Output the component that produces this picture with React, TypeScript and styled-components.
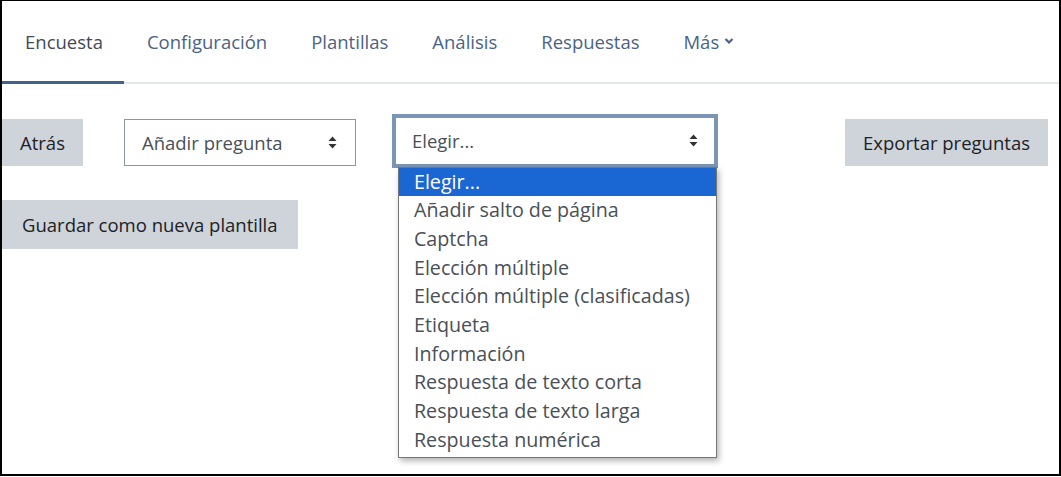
import styled, { createGlobalStyle } from 'styled-components';

const GlobalStyle = createGlobalStyle`
  body {
    margin: 0;
    background: #fff;
    font-family: "Open Sans", "Noto Sans", sans-serif;
  }
`;

const tabs = ['Encuesta', 'Configuración', 'Plantillas', 'Análisis', 'Respuestas'];

const options = [
  'Elegir...',
  'Añadir salto de página',
  'Captcha',
  'Elección múltiple',
  'Elección múltiple (clasificadas)',
  'Etiqueta',
  'Información',
  'Respuesta de texto corta',
  'Respuesta de texto larga',
  'Respuesta numérica',
];

const SortArrows = () => (
  <svg width="9" height="13" viewBox="0 0 9 13">
    <path d="M4.5 0.5 L8.5 5 H0.5 Z" fill="#333" />
    <path d="M4.5 12.5 L8.5 8 H0.5 Z" fill="#333" />
  </svg>
);

const Chevron = () => (
  <svg width="10" height="8" viewBox="0 0 10 8">
    <path d="M1.5 2 L5 5.5 L8.5 2" stroke="#4a6385" strokeWidth="2.2" fill="none" />
  </svg>
);

const App = () => {
  return (
    <>
      <GlobalStyle />
      <Frame>
        <TabNav>
          {tabs.map((t, i) => (
            <Tab key={t} active={i === 0}>{t}</Tab>
          ))}
          <Tab active={false}>
            Más <Chevron />
          </Tab>
        </TabNav>
        <Toolbar>
          <GrayButton>Atrás</GrayButton>
          <Select>
            <span>Añadir pregunta</span>
            <SortArrows />
          </Select>
          <FocusRing>
            <ChoiceSelect>
              <span>Elegir...</span>
              <SortArrows />
            </ChoiceSelect>
            <OptionList>
              {options.map((o, i) => (
                <OptionItem key={o} selected={i === 0}>{o}</OptionItem>
              ))}
            </OptionList>
          </FocusRing>
          <Spacer />
          <GrayButton>Exportar preguntas</GrayButton>
        </Toolbar>
        <SecondRow>
          <GrayButton tall pad={20}>Guardar como nueva plantilla</GrayButton>
        </SecondRow>
      </Frame>
    </>
  );
};

const Frame = styled.div`
  box-sizing: border-box;
  width: 1061px;
  height: 476px;
  border-style: solid;
  border-color: #000;
  border-width: 1px 2px 2px 2px;
  display: flex;
  flex-direction: column;
  font-size: 18.5px;
`;

const TabNav = styled.nav`
  display: flex;
  height: 81px;
  border-bottom: 2px solid #e3e6ea;
  font-size: 18.5px;
`;

const Tab = styled.div<{ active: boolean }>`
  display: flex;
  align-items: center;
  gap: 5px;
  padding: 0 21px 0 23px;
  margin-bottom: -2px;
  color: ${(p) => (p.active ? '#3f4a5a' : '#4a6385')};
  border-bottom: 3px solid ${(p) => (p.active ? '#3f6390' : 'transparent')};
`;

const Toolbar = styled.div`
  display: flex;
  align-items: center;
  margin-top: 35px;
  height: 47px;
  padding-right: 11px;
`;

const GrayButton = styled.button<{ pad?: number; tall?: boolean }>`
  font-family: inherit;
  font-size: 18.5px;
  color: #1d2125;
  background: #ced4da;
  border: none;
  border-radius: 0;
  height: ${(p) => (p.tall ? 49 : 47)}px;
  padding: 0 ${(p) => p.pad ?? 18}px;
`;

const Select = styled.div`
  box-sizing: border-box;
  display: flex;
  align-items: center;
  justify-content: space-between;
  margin-left: 41px;
  width: 232px;
  height: 47px;
  padding: 0 18px 0 17px;
  border: 1px solid #8f959e;
  color: #495057;
  background: #fff;
`;

const FocusRing = styled.div`
  position: relative;
  margin-left: 36px;
  padding: 4px;
  margin-top: -4px;
  background: #7d95b5;
`;

const ChoiceSelect = styled.div`
  box-sizing: border-box;
  display: flex;
  align-items: center;
  justify-content: space-between;
  width: 318px;
  height: 46px;
  padding: 0 16px 0 16px;
  color: #495057;
  background: #fff;
`;

const OptionList = styled.ul`
  position: absolute;
  left: 6px;
  top: 53px;
  box-sizing: border-box;
  width: 319px;
  margin: 0;
  padding: 0 0 3px;
  list-style: none;
  background: #fff;
  border: 1px solid #767676;
  box-shadow: 2px 3px 6px rgba(0, 0, 0, 0.3);
  font-size: 19.7px;
  z-index: 2;
`;

const OptionItem = styled.li<{ selected: boolean }>`
  height: 28.7px;
  line-height: 28.7px;
  padding-left: 15px;
  color: ${(p) => (p.selected ? '#fff' : '#495057')};
  background: ${(p) => (p.selected ? '#1a66d2' : 'transparent')};
`;

const Spacer = styled.div`
  flex: 1;
`;

const SecondRow = styled.div`
  display: flex;
  margin-top: 34px;
`;

export default App;
